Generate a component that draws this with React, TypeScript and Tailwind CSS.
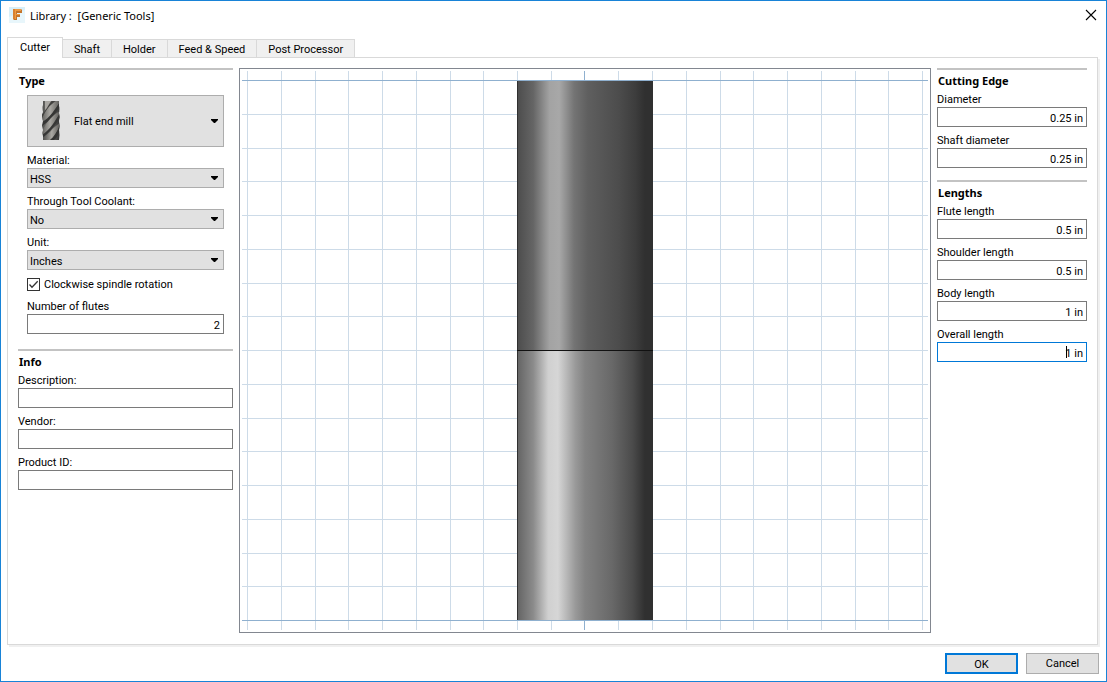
import React, { useId } from "react";

const GRID_STEP = 33.75;
const VERTICALS = Array.from({ length: 21 }, (_, i) => Math.round(5 + i * GRID_STEP)).filter((_, i) => i !== 10);
const HORIZONTALS = Array.from({ length: 17 }, (_, i) => Math.round(9 + i * GRID_STEP));

function Section({ title, className = "", children }: { title: string; className?: string; children: React.ReactNode }) {
  return (
    <section className={`border-t-2 border-[#c3c3c3] ${className}`}>
      <h2 className="h-[22px] pl-px font-['Noto_Sans','Open_Sans',sans-serif] text-[11px] leading-[22px] font-bold">{title}</h2>
      {children}
    </section>
  );
}

function TextField({ label, value = "", focused = false }: { label: string; value?: string; focused?: boolean }) {
  const id = useId();
  return (
    <div>
      <label htmlFor={id} className="block leading-[15px]">{label}</label>
      <div className="relative">
        <input
          id={id}
          type="text"
          defaultValue={value}
          className={`block h-5 w-full border bg-white pt-0.5 pr-[3px] pl-1 text-right outline-none ${focused ? "border-[#0078d7]" : "border-[#7a7a7a]"}`}
        />
        {focused && <span className="absolute top-1 right-5 h-3 w-px bg-black" />}
      </div>
    </div>
  );
}

function Arrow() {
  return (
    <svg viewBox="0 0 7 4" className="pointer-events-none absolute top-1/2 right-1.5 -mt-0.5 h-1 w-[7px]" aria-hidden="true">
      <path d="M0 0H7V1L4 4H3L0 1Z" fill="#000" />
    </svg>
  );
}

function SelectField({ label, value, options }: { label: string; value: string; options: string[] }) {
  const id = useId();
  return (
    <div>
      <label htmlFor={id} className="block leading-[15px]">{label}</label>
      <div className="relative">
        <select id={id} defaultValue={value} className="block h-5 w-full appearance-none border border-[#adadad] bg-[#e1e1e1] pt-[3px] pl-0.5">
          {options.map((o) => <option key={o}>{o}</option>)}
        </select>
        <Arrow />
      </div>
    </div>
  );
}

function EndMillIcon() {
  return (
    <svg viewBox="0 0 18 39" className="pointer-events-none absolute top-[6px] left-[15px] h-[39px] w-[18px]" aria-hidden="true">
      <defs>
        <linearGradient id="mill" x1="0" x2="1" y1="0" y2="0">
          <stop offset="0" stopColor="#4b4b49" />
          <stop offset="0.35" stopColor="#7d7c79" />
          <stop offset="0.6" stopColor="#5d5c59" />
          <stop offset="1" stopColor="#333" />
        </linearGradient>
        <linearGradient id="land" x1="0" x2="1" y1="0" y2="0">
          <stop offset="0" stopColor="#62615e" />
          <stop offset="0.45" stopColor="#aaa8a3" />
          <stop offset="1" stopColor="#5a5956" />
        </linearGradient>
        <clipPath id="millBody">
          <path d="M1 0H17V5Q18 8 17 12Q18 16 17 20Q18 25 17 29Q18 34 17 39H1V35Q0 32 1 29L0 25Q1 22 1 20Q0 16 0 14L1 11Q0 6 1 4Z" />
        </clipPath>
      </defs>
      <g clipPath="url(#millBody)">
        <rect width="18" height="39" fill="url(#mill)" />
        <path d="M3 0H9L6 7L3 9Z" fill="#a9a7a2" />
        <path d="M0 13C5 9 6 3 10 0H13C9 4 7 12 0 17Z" fill="#42413f" />
        <path d="M0 18C2 12 7 4 14 0H18V1C14 7 10 16 0 22Z" fill="url(#land)" />
        <path d="M0 21C8 17 13 8 18 1V6C14 11 8 20 0 25Z" fill="#353534" />
        <path d="M0 31C2 25 9 15 18 10V12C14 20 9 29 0 34Z" fill="url(#land)" />
        <path d="M0 34C8 29 13 20 18 12V17C13 24 8 32 0 37Z" fill="#373736" />
        <path d="M3 39C5 34 11 26 18 22V24C15 31 12 36 8 39Z" fill="url(#land)" />
        <path d="M8 39C12 36 15 31 18 24V29C16 33 15 37 12 39Z" fill="#343433" />
      </g>
    </svg>
  );
}

function AppIcon() {
  return (
    <svg viewBox="0 0 16 16" className="h-4 w-4" aria-hidden="true">
      <rect width="16" height="16" fill="#d8eff9" />
      <path d="M0 10L16 3V16H0Z" fill="#e8f6fb" />
      <path d="M4 2H12L13 3V6H8V7H11V10H8V13H5L4 12Z" fill="#c4742b" />
      <path d="M4 2H12V4H7V7H11V8H7V12H4Z" fill="#ee9a42" />
      <path d="M4 2H6V12H4Z" fill="#d98231" />
    </svg>
  );
}

function ToolPreview() {
  return (
    <svg viewBox="0 0 686 559" className="h-full w-full" shapeRendering="crispEdges" role="img" aria-label="Tool preview">
      <defs>
        <linearGradient id="shaft">
          <stop offset="0" stopColor="#4c4c4c" />
          <stop offset="0.12" stopColor="#656565" />
          <stop offset="0.24" stopColor="#a3a3a3" />
          <stop offset="0.31" stopColor="#a8a8a8" />
          <stop offset="0.42" stopColor="#747474" />
          <stop offset="0.52" stopColor="#5f5f5f" />
          <stop offset="0.75" stopColor="#4c4c4c" />
          <stop offset="0.87" stopColor="#3d3d3d" />
          <stop offset="0.94" stopColor="#303030" />
          <stop offset="1" stopColor="#303030" />
        </linearGradient>
        <linearGradient id="flute">
          <stop offset="0" stopColor="#636363" />
          <stop offset="0.12" stopColor="#8b8b8b" />
          <stop offset="0.23" stopColor="#d0d0d0" />
          <stop offset="0.3" stopColor="#d6d6d6" />
          <stop offset="0.43" stopColor="#999" />
          <stop offset="0.5" stopColor="#828282" />
          <stop offset="0.7" stopColor="#686868" />
          <stop offset="0.85" stopColor="#4b4b4b" />
          <stop offset="0.94" stopColor="#303030" />
          <stop offset="1" stopColor="#303030" />
        </linearGradient>
      </defs>
      {VERTICALS.map((x) => <rect key={x} x={x} y="0" width="1" height="559" fill="#cddbe8" />)}
      {HORIZONTALS.map((y, i) => <rect key={y} x="0" y={y} width="686" height="1" fill={i === 0 || i === 16 ? "#8fb0cf" : "#cddbe8"} />)}
      <rect x="342" y="0" width="1" height="559" fill="#8fb0cf" />
      <rect x="275" y="10" width="136" height="269" fill="url(#shaft)" />
      <rect x="275" y="280" width="136" height="269" fill="url(#flute)" />
      <rect x="275" y="10" width="1" height="539" fill="#303030" />
      <rect x="275" y="279" width="136" height="1" fill="#111" />
    </svg>
  );
}

const TABS = ["Shaft", "Holder", "Feed & Speed", "Post Processor"];

export default function App() {
  return (
    <div className="flex min-h-screen flex-col border border-[#1883d7] bg-white font-['Roboto','Noto_Sans',sans-serif] text-[11px] text-black">
      <header className="flex h-9 items-start pt-1.5 pl-2">
        <AppIcon />
        <h1 className="ml-[5px] font-['Noto_Sans','Open_Sans',sans-serif] leading-[18px] whitespace-pre">Library :  [Generic Tools]</h1>
        <button type="button" aria-label="Close" className="mr-[9px] ml-auto flex h-4 w-3 items-center justify-center">
          <svg viewBox="0 0 12 12" className="h-3 w-3" aria-hidden="true"><path d="M1 1L11 11M11 1L1 11" stroke="#000" strokeWidth="1.1" /></svg>
        </button>
      </header>

      <nav role="tablist" className="-mb-px flex items-end pl-1.5">
        <button type="button" role="tab" aria-selected="true" className="z-10 h-[21px] border border-b-0 border-[#d9d9d9] bg-white px-3 pt-px">Cutter</button>
        {TABS.map((tab) => (
          <button key={tab} type="button" role="tab" aria-selected="false" className="h-[19px] border border-l-0 border-[#d9d9d9] bg-[#f0f0f0] px-[11px] pt-0.5">{tab}</button>
        ))}
      </nav>

      <main className="mr-2 ml-1.5 flex flex-1 gap-1.5 border border-[#d9d9d9] px-2.5 pt-2.5 pb-[11px] shadow-[2px_2px_0_#f0f0f0]">
        <div className="w-[215px] shrink-0">
          <Section title="Type">
            <div className="mt-[3px] mr-[9px] ml-[9px] flex flex-col gap-1.5">
              <div className="relative">
                <select aria-label="Tool type" className="block h-[52px] w-full appearance-none border border-[#adadad] bg-[#e1e1e1] pt-[3px] pl-[46px]">
                  <option>Flat end mill</option>
                  <option>Ball end mill</option>
                </select>
                <EndMillIcon />
                <Arrow />
              </div>
              <SelectField label="Material:" value="HSS" options={["HSS", "Carbide"]} />
              <SelectField label="Through Tool Coolant:" value="No" options={["No", "Yes"]} />
              <SelectField label="Unit:" value="Inches" options={["Inches", "Millimeters"]} />
              <label className="flex h-[17px] items-center gap-1">
                <span className="relative flex">
                  <input type="checkbox" defaultChecked className="peer h-[13px] w-[13px] appearance-none border border-[#333] bg-white" />
                  <svg viewBox="0 0 13 13" className="pointer-events-none absolute inset-0 hidden h-[13px] w-[13px] peer-checked:block" aria-hidden="true"><path d="M2.5 6.5L5 9.2L10.7 3.3" fill="none" stroke="#333" strokeWidth="1.3" /></svg>
                </span>
                <span className="pt-0.5">Clockwise spindle rotation</span>
              </label>
              <TextField label="Number of flutes" value="2" />
            </div>
          </Section>
          <Section title="Info" className="mt-[15px]">
            <div className="flex flex-col gap-1.5">
              <TextField label="Description:" />
              <TextField label="Vendor:" />
              <TextField label="Product ID:" />
            </div>
          </Section>
        </div>

        <div className="min-w-0 flex-1 border border-[#828790] p-0.5">
          <ToolPreview />
        </div>

        <div className="w-[150px] shrink-0">
          <Section title="Cutting Edge">
            <div className="flex flex-col gap-1.5">
              <TextField label="Diameter" value="0.25 in" />
              <TextField label="Shaft diameter" value="0.25 in" />
            </div>
          </Section>
          <Section title="Lengths" className="mt-3">
            <div className="flex flex-col gap-1.5">
              <TextField label="Flute length" value="0.5 in" />
              <TextField label="Shoulder length" value="0.5 in" />
              <TextField label="Body length" value="1 in" />
              <TextField label="Overall length" value="1 in" focused />
            </div>
          </Section>
        </div>
      </main>

      <footer className="flex justify-end gap-2 pt-2 pr-[7px] pb-[7px]">
        <button type="button" className="h-[21px] w-[73px] border-2 border-[#0078d7] bg-[#e1e1e1] pt-0.5">OK</button>
        <button type="button" className="h-[21px] w-[73px] border border-[#adadad] bg-[#e1e1e1] pt-0.5">Cancel</button>
      </footer>
    </div>
  );
}
